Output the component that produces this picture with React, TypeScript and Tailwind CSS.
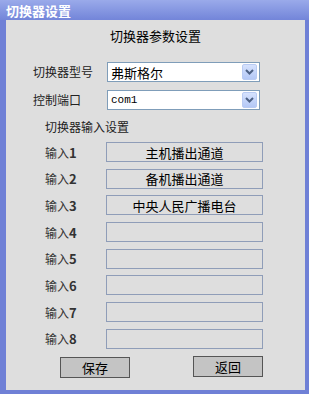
import React from 'react';

const inputs = ['主机播出通道', '备机播出通道', '中央人民广播电台', '', '', '', '', ''];

const Chevron = () => (
    <svg width="9" height="6" viewBox="0 0 9 6">
        <path d="M1 1 L4.5 4.5 L8 1" fill="none" stroke="#4d6185" strokeWidth="2" />
    </svg>
);

const SelectBox = ({ value, mono }: { value: string; mono?: boolean }) => (
    <div className="flex h-[20px] w-[153px] items-center border border-[#7f9db9] bg-white pl-[3px] pr-[2px]">
        <span
            className={
                mono
                    ? "flex-1 text-[11px] leading-none text-black font-['Liberation_Mono','Noto_Sans_CJK_SC',monospace]"
                    : "flex-1 text-[13px] leading-none text-black"
            }
        >
            {value}
        </span>
        <div className="flex h-[16px] w-[15px] items-center justify-center rounded-[2px] border border-[#b9cbf3] bg-gradient-to-b from-[#d6e2fd] to-[#b4c8f6]">
            <Chevron />
        </div>
    </div>
);

const App = () => {
    return (
        <div className="h-[396px] w-[312px] bg-white font-['Noto_Sans_CJK_SC',sans-serif]">
            <div className="flex h-[394px] w-[309px] flex-col bg-[#6f80d6]">
                {/* title bar */}
                <div className="flex h-[20px] items-center bg-gradient-to-b from-[#9aaaea] to-[#7385d9] pl-[6px]">
                    <span className="text-[13px] font-bold leading-none text-white">切换器设置</span>
                </div>

                <div className="mb-[4px] ml-[6px] mr-[4px] flex flex-1 flex-col bg-[#dedede] text-[#222]">
                    <div className="mt-[8px] h-[16px] text-center text-[13px] leading-[16px] text-black">
                        切换器参数设置
                    </div>

                    <div className="mt-[18px] flex items-center">
                        <span className="w-[101px] pl-[27px] text-[12px] leading-none whitespace-nowrap">切换器型号</span>
                        <SelectBox value="弗斯格尔" />
                    </div>
                    <div className="mt-[8px] flex items-center">
                        <span className="w-[101px] pl-[27px] text-[12px] leading-none whitespace-nowrap">控制端口</span>
                        <SelectBox value="com1" mono />
                    </div>

                    <div className="mt-[9px] h-[16px] pl-[39px] text-[12px] leading-[16px]">切换器输入设置</div>

                    <div className="mt-[7px] flex flex-col gap-[6.7px]">
                        {inputs.map((v, i) => (
                            <div key={i} className="flex items-center">
                                <span className="w-[100px] pl-[39px] text-[12px] leading-none text-[#333]">
                                    输入<span className="font-bold text-[13px]">{i + 1}</span>
                                </span>
                                <div className="flex h-[20px] w-[157px] items-center justify-center border border-[#8f9db8] text-[13px] leading-none text-black">
                                    {v}
                                </div>
                            </div>
                        ))}
                    </div>

                    <div className="mt-[8px] flex">
                        <button className="ml-[54px] h-[21px] w-[70px] border border-[#555] bg-[#c4c4c4] text-[13px] leading-none text-black">
                            保存
                        </button>
                        <button className="ml-[63px] -mt-[1px] h-[21px] w-[70px] border border-[#555] bg-[#c4c4c4] text-[13px] leading-none text-black">
                            返回
                        </button>
                    </div>
                </div>
            </div>
        </div>
    );
};

export default App;
